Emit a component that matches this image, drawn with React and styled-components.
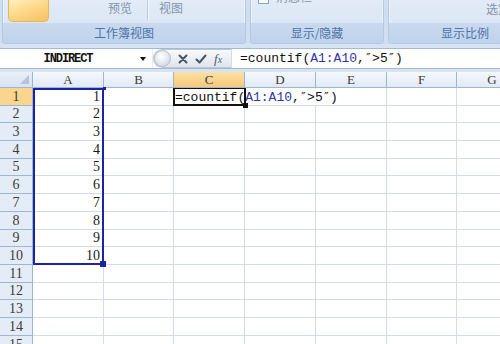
import styled, { createGlobalStyle } from 'styled-components';

const GlobalStyle = createGlobalStyle`
	html, body {
		margin: 0;
		padding: 0;
	}
	body {
		background: #d6e3f3;
		font-family: "Noto Sans CJK SC", "Noto Sans", sans-serif;
	}
`;

const COL_WIDTHS = [71, 70, 71, 71, 71, 70, 71];
const COLS = ['A', 'B', 'C', 'D', 'E', 'F', 'G'];
const ROW_HEIGHTS = [18, 17, 18, 18, 17, 18, 18, 18, 17, 18, 18, 17, 18, 18, 18];

const Page = styled.div`
	width: 500px;
	height: 344px;
	overflow: hidden;
	background: #d6e3f3;
	display: flex;
	flex-direction: column;
`;

const Ribbon = styled.div`
	height: 44px;
	flex-shrink: 0;
	display: flex;
	gap: 4px;
	padding-left: 2px;
	background: #cfdef1;
`;

const Group = styled.div`
	width: ${({ $width }) => $width}px;
	flex-shrink: 0;
	height: 44px;
	box-sizing: border-box;
	display: flex;
	flex-direction: column;
	border: 1px solid #b3c8e2;
	border-top: none;
	border-radius: 0 0 4px 4px;
	background: linear-gradient(#e2ebf7, #d6e3f3);
	box-shadow: inset 1px 0 #eef4fb, inset -1px 0 #eef4fb;
	overflow: hidden;
`;

const GroupBody = styled.div`
	height: 23px;
	display: flex;
	align-items: flex-start;
	overflow: hidden;
`;

const GroupLabel = styled.div`
	height: 20px;
	background: linear-gradient(#c9daef, #bfd3ec);
	color: #4e73a8;
	font-size: 12px;
	line-height: 20px;
	text-align: center;
`;

const BigButton = styled.div`
	width: 41px;
	height: 22px;
	margin-left: 5px;
	box-sizing: border-box;
	border: 1px solid #e8b75c;
	border-top: none;
	border-radius: 0 0 5px 5px;
	background: linear-gradient(160deg, #fff1c2 0%, #fdd98a 45%, #f6c062 100%);
`;

const RibbonText = styled.span`
	margin-left: ${({ $ml }) => $ml}px;
	margin-top: ${({ $mt = 0 }) => $mt}px;
	font-size: 12px;
	line-height: 16px;
	color: #8494aa;
	white-space: nowrap;
`;

const RibbonSep = styled.div`
	width: 1px;
	height: 20px;
	margin-left: 15px;
	background: #b7c9e0;
	box-shadow: 1px 0 #f1f6fc;
`;

const CheckBox = styled.div`
	width: 11px;
	height: 11px;
	margin-left: 7px;
	margin-top: -7px;
	box-sizing: border-box;
	border: 1px solid #8ea3bf;
	background: #fbfcfe;
`;

const FormulaBar = styled.div`
	height: 21px;
	margin-top: 4px;
	flex-shrink: 0;
	display: flex;
	box-sizing: border-box;
	background: #fff;
	border-top: 1px solid #a7b9d1;
	border-bottom: 1px solid #a7b9d1;
`;

const NameBox = styled.div`
	width: 153px;
	display: flex;
	align-items: center;
	box-sizing: border-box;
	border-right: 1px solid #e6ebf1;
`;

const NameText = styled.span`
	width: 136px;
	text-align: center;
	font-family: "Liberation Mono", monospace;
	font-size: 12px;
	letter-spacing: -1.1px;
	font-weight: bold;
	color: #111;
`;

const DropArrow = styled.span`
	width: 0;
	height: 0;
	margin-left: 4px;
	border-left: 3.5px solid transparent;
	border-right: 3.5px solid transparent;
	border-top: 4px solid #111;
`;

const FxPill = styled.div`
	width: 78px;
	height: 19px;
	box-sizing: border-box;
	display: flex;
	align-items: center;
	border: 1px solid #bcc7d4;
	border-right: none;
	border-radius: 10px 0 0 10px;
	background: linear-gradient(#f8fafc, #dfe5ec);
`;

const Knob = styled.div`
	width: 17px;
	height: 17px;
	border-radius: 50%;
	box-sizing: border-box;
	border: 1px solid #b3bfcc;
	background: radial-gradient(circle at 40% 35%, #ffffff 0%, #e7ecf2 45%, #c3ccd7 100%);
`;

const BarIcon = styled.span`
	display: flex;
	margin-left: ${({ $ml }) => $ml}px;
`;

const FxText = styled.span`
	margin-left: 7px;
	font-family: "Liberation Serif", serif;
	font-style: italic;
	font-size: 13px;
	color: #55606d;
	line-height: 1;

	& small {
		font-size: 10px;
	}
`;

const FormulaInput = styled.div`
	flex: 1;
	padding-left: 8px;
	font-family: "Liberation Mono", monospace;
	font-size: 13px;
	line-height: 19px;
	color: #111;
	white-space: nowrap;
	border-left: 1px solid #d5dde7;
`;

const Sheet = styled.div`
	margin-top: 3px;
	position: relative;
	display: grid;
	grid-template-columns: 33px ${COL_WIDTHS.map((w) => `${w}px`).join(' ')};
	grid-template-rows: 16px ${ROW_HEIGHTS.map((h) => `${h}px`).join(' ')};
	background: #fff;
`;

const Corner = styled.div`
	position: relative;
	box-sizing: border-box;
	background: linear-gradient(#e9eff8, #d9e3f1);
	border-right: 1px solid #9eb6ce;
	border-bottom: 1px solid #9eb6ce;

	&::after {
		content: '';
		position: absolute;
		right: 3px;
		bottom: 3px;
		border-left: 9px solid transparent;
		border-bottom: 9px solid #b5c5d9;
	}
`;

const ColHead = styled.div`
	box-sizing: border-box;
	border-right: 1px solid #9eb6ce;
	border-bottom: 1px solid #9eb6ce;
	background: ${({ $active }) =>
		$active ? 'linear-gradient(#fbe0a8, #f6c978)' : 'linear-gradient(#f6f9fd, #e1e9f4)'};
	font-family: "Liberation Serif", serif;
	font-size: 13px;
	line-height: 16px;
	text-align: center;
	color: #3a3a3a;
`;

const RowHead = styled.div`
	box-sizing: border-box;
	border-right: 1px solid #9eb6ce;
	border-bottom: 1px solid #9eb6ce;
	background: ${({ $active }) => ($active ? '#f9d590' : '#e4ecf7')};
	font-family: "Liberation Serif", serif;
	font-size: 14px;
	display: flex;
	align-items: center;
	justify-content: center;
	color: #3c3c3c;
`;

const Cell = styled.div`
	box-sizing: border-box;
	border-right: 1px solid #d4dae6;
	border-bottom: 1px solid #d4dae6;
	font-family: "Liberation Serif", serif;
	font-size: 14px;
	display: flex;
	align-items: center;
	justify-content: flex-end;
	padding-right: 3px;
	color: #1a1a1a;
`;

const RangeBox = styled.div`
	position: absolute;
	left: 33px;
	top: 16px;
	width: 71px;
	height: 177px;
	box-sizing: border-box;
	border: 2px solid #1b24a6;
	pointer-events: none;
`;

const Handle = styled.div`
	position: absolute;
	width: ${({ $size }) => $size}px;
	height: ${({ $size }) => $size}px;
	background: ${({ $color }) => $color};
	${({ $top }) => ($top ? 'top: -3px;' : 'bottom: -4px;')}
	right: -4px;
`;

const Editor = styled.div`
	position: absolute;
	left: 175px;
	top: 17px;
	height: 16px;
	padding-right: 6px;
	background: #fff;
	font-family: "Liberation Mono", monospace;
	font-size: 13px;
	line-height: 16px;
	color: #111;
	white-space: nowrap;
`;

const RefText = styled.span`
	color: #3434a2;
`;

const Quote = styled.span`
	font-family: "DejaVu Sans Mono", monospace;
	font-size: 12px;
`;

const ActiveCell = styled.div`
	position: absolute;
	left: 173px;
	top: 16px;
	width: 73px;
	height: 18px;
	box-sizing: border-box;
	border: 2px solid #111;
	border-top-width: 1px;
`;

const CrossIcon = () => (
	<svg width="10" height="10" viewBox="0 0 10 10">
		<path d="M1.5 1.5 L8.5 8.5 M8.5 1.5 L1.5 8.5" stroke="#4a5563" strokeWidth="2" strokeLinecap="round" />
	</svg>
);

const CheckIcon = () => (
	<svg width="12" height="10" viewBox="0 0 12 10">
		<path d="M1.5 5.5 L4.5 8.5 L10.5 1.5" stroke="#4a5563" strokeWidth="2" fill="none" strokeLinecap="round" strokeLinejoin="round" />
	</svg>
);

const Formula = () => (
	<>
		=countif(<RefText>A1:A10</RefText>,<Quote>″</Quote>&gt;5<Quote>″</Quote>)
	</>
);

export default function App() {
	return (
		<Page>
			<GlobalStyle />
			<Ribbon>
				<Group $width={244}>
					<GroupBody>
						<BigButton />
						<RibbonText $ml={59}>预览</RibbonText>
						<RibbonSep />
						<RibbonText $ml={11}>视图</RibbonText>
					</GroupBody>
					<GroupLabel>工作簿视图</GroupLabel>
				</Group>
				<Group $width={134}>
					<GroupBody>
						<CheckBox />
						<RibbonText $ml={7} $mt={-11}>消息栏</RibbonText>
					</GroupBody>
					<GroupLabel>显示/隐藏</GroupLabel>
				</Group>
				<Group $width={154}>
					<GroupBody>
						<RibbonText $ml={97} $mt={1}>选定区域</RibbonText>
					</GroupBody>
					<GroupLabel>显示比例</GroupLabel>
				</Group>
			</Ribbon>

			<FormulaBar>
				<NameBox>
					<NameText>INDIRECT</NameText>
					<DropArrow />
				</NameBox>
				<FxPill>
					<Knob />
					<BarIcon $ml={7}>
						<CrossIcon />
					</BarIcon>
					<BarIcon $ml={7}>
						<CheckIcon />
					</BarIcon>
					<FxText>
						f<small>x</small>
					</FxText>
				</FxPill>
				<FormulaInput>
					<Formula />
				</FormulaInput>
			</FormulaBar>

			<Sheet>
				<Corner />
				{COLS.map((c) => (
					<ColHead key={c} $active={c === 'C'}>
						{c}
					</ColHead>
				))}
				{ROW_HEIGHTS.map((_, i) => (
					<RowGroup key={i} row={i + 1} />
				))}
				<RangeBox>
					<Handle $top $size={3} $color="#1b24a6" />
					<Handle $size={6} $color="#1b24a6" />
				</RangeBox>
				<Editor>
					<Formula />
				</Editor>
				<ActiveCell>
					<Handle $size={5} $color="#111" />
				</ActiveCell>
			</Sheet>
		</Page>
	);
}

const RowGroup = ({ row }) => (
	<>
		<RowHead $active={row === 1}>{row}</RowHead>
		{COLS.map((c) => (
			<Cell key={c}>{c === 'A' && row <= 10 ? row : ''}</Cell>
		))}
	</>
);
